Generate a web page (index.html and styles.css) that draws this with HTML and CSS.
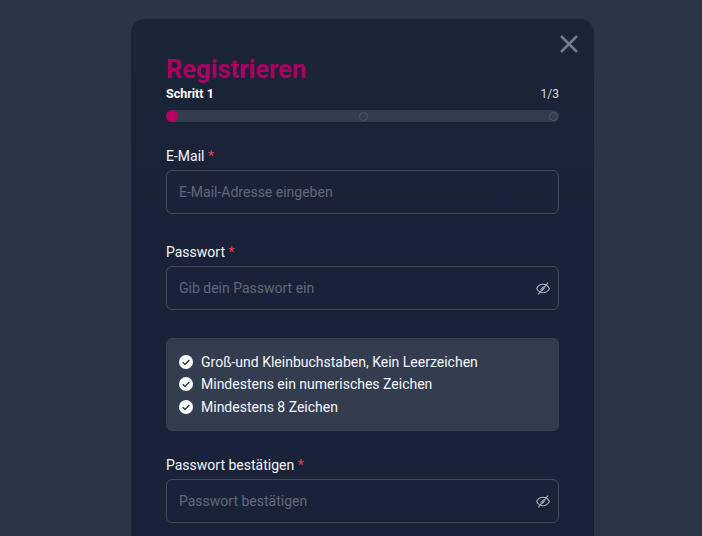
FILE: index.html
```html
<!DOCTYPE html>
<html lang="de">
<head>
<meta charset="utf-8">
<title>Registrieren</title>
<link rel="stylesheet" href="styles.css">
</head>
<body>
<main class="modal">
  <button class="close" aria-label="Schließen">
    <svg width="18" height="18" viewBox="0 0 18 18"><path d="M1 1l16 16M17 1L1 17" stroke="#757d8d" stroke-width="2.500" fill="none"/></svg>
  </button>
  <h1 class="title">Registrieren</h1>
  <div class="step-row"><span class="step">Schritt 1</span><span class="count">1/3</span></div>
  <div class="progress">
    <span class="dot active"></span><span class="dot"></span><span class="dot"></span>
  </div>
  <div class="field first">
    <label class="label">E-Mail <span class="req">*</span></label>
    <div class="input"><span class="ph">E-Mail-Adresse eingeben</span></div>
  </div>
  <div class="field">
    <label class="label">Passwort <span class="req">*</span></label>
    <div class="input"><span class="ph">Gib dein Passwort ein</span>
      <svg class="eye" width="14" height="13" viewBox="0 0 14 13"><path d="M.6 6.500C2.100 3.700 4.300 2.300 7 2.300s4.900 1.400 6.400 4.200c-1.500 2.800-3.700 4.200-6.400 4.200S2.100 9.300.6 6.500z" fill="none" stroke="#a9afbb" stroke-width="1.100"/><path d="M4.700 7.700L7.300 4.500M6.300 8.800l2.700-3.400" stroke="#a9afbb" stroke-width="1" fill="none"/><path d="M2.300 12.300L12 .7" stroke="#a9afbb" stroke-width="1.100" fill="none"/></svg>
    </div>
  </div>
  <ul class="rules">
    <li class="rule"><svg class="check" width="14" height="14" viewBox="0 0 14 14"><circle cx="7" cy="7" r="7" fill="#fff"/><path d="M3.700 7.200l2.300 2.300 4.300-4.600" stroke="#2f384b" stroke-width="1.500" fill="none"/></svg>Groß-und Kleinbuchstaben, Kein Leerzeichen</li>
    <li class="rule"><svg class="check" width="14" height="14" viewBox="0 0 14 14"><circle cx="7" cy="7" r="7" fill="#fff"/><path d="M3.700 7.200l2.300 2.300 4.300-4.600" stroke="#2f384b" stroke-width="1.500" fill="none"/></svg>Mindestens ein numerisches Zeichen</li>
    <li class="rule"><svg class="check" width="14" height="14" viewBox="0 0 14 14"><circle cx="7" cy="7" r="7" fill="#fff"/><path d="M3.700 7.200l2.300 2.300 4.300-4.600" stroke="#2f384b" stroke-width="1.500" fill="none"/></svg>Mindestens 8 Zeichen</li>
  </ul>
  <div class="field">
    <label class="label">Passwort bestätigen <span class="req">*</span></label>
    <div class="input"><span class="ph">Passwort bestätigen</span>
      <svg class="eye" width="14" height="13" viewBox="0 0 14 13"><path d="M.6 6.500C2.100 3.700 4.300 2.300 7 2.300s4.900 1.400 6.400 4.200c-1.500 2.800-3.700 4.200-6.400 4.200S2.100 9.300.6 6.500z" fill="none" stroke="#a9afbb" stroke-width="1.100"/><path d="M4.700 7.700L7.300 4.500M6.300 8.800l2.700-3.400" stroke="#a9afbb" stroke-width="1" fill="none"/><path d="M2.300 12.300L12 .7" stroke="#a9afbb" stroke-width="1.100" fill="none"/></svg>
    </div>
  </div>
</main>
</body>
</html>
```
FILE: styles.css
```css
html, body { margin: 0; height: 536px; overflow: hidden; }
body {
  background: #2b3548;
  font-family: Roboto, "Liberation Sans", sans-serif;
  color: #fff;
  display: flex;
  align-items: flex-start;
  padding-left: 131px;
  box-sizing: border-box;
}
.modal {
  box-sizing: border-box;
  position: relative;
  width: 463px;
  height: 517px;
  flex: none;
  margin-top: 19px;
  padding: 35px 35px 0;
  background: linear-gradient(#1a2536, #1a2239 35%);
  border-radius: 14px 14px 0 0;
}
.close {
  position: absolute;
  top: 16px;
  right: 16px;
  padding: 0;
  border: 0;
  background: none;
  display: flex;
}
.title {
  margin: 0;
  padding-top: 1px;
  font-size: 25.500px;
  line-height: 28px;
  font-weight: 700;
  color: #ab0060;
}
.step-row {
  display: flex;
  justify-content: space-between;
  align-items: center;
  height: 16px;
  margin-top: 3px;
}
.step { font-size: 12.500px; font-weight: 700; margin-bottom: 2px; }
.count { font-size: 12px; color: #d5d9e0; }
.progress {
  display: flex;
  justify-content: space-between;
  align-items: center;
  height: 12px;
  margin-top: 8px;
  border-radius: 6px;
  background: #343d50;
}
.dot {
  box-sizing: border-box;
  width: 9px;
  height: 9px;
  margin-right: 1px;
  border: 1px solid #505869;
  border-radius: 50%;
}
.dot.active {
  width: 12px;
  height: 12px;
  margin: 0;
  border: 0;
  background: #b8005f;
}
.field { margin-top: 28px; }
.field.first { margin-top: 24px; }
.label {
  display: block;
  font-size: 14px;
  line-height: 20px;
  color: #f3f5f8;
}
.req { color: #e8414f; }
.input {
  box-sizing: border-box;
  display: flex;
  align-items: center;
  justify-content: space-between;
  height: 44px;
  margin-top: 4px;
  padding: 0 8px 0 12px;
  border: 1px solid #414a5e;
  border-radius: 6px;
}
.ph { font-size: 14px; color: #616979; }
.rules {
  box-sizing: border-box;
  list-style: none;
  height: 93px;
  margin: 28px 0 0;
  padding: 12px;
  background: #343d50;
  border: 1px solid #3a4356;
  border-radius: 6px;
}
.rule {
  display: flex;
  align-items: center;
  gap: 8px;
  height: 22px;
  font-size: 14px;
  color: #f5f7fa;
}
.rule + .rule + .rule { margin-top: 1px; }
.check { flex: none; }
.rules + .field { margin-top: 24px; }
```
